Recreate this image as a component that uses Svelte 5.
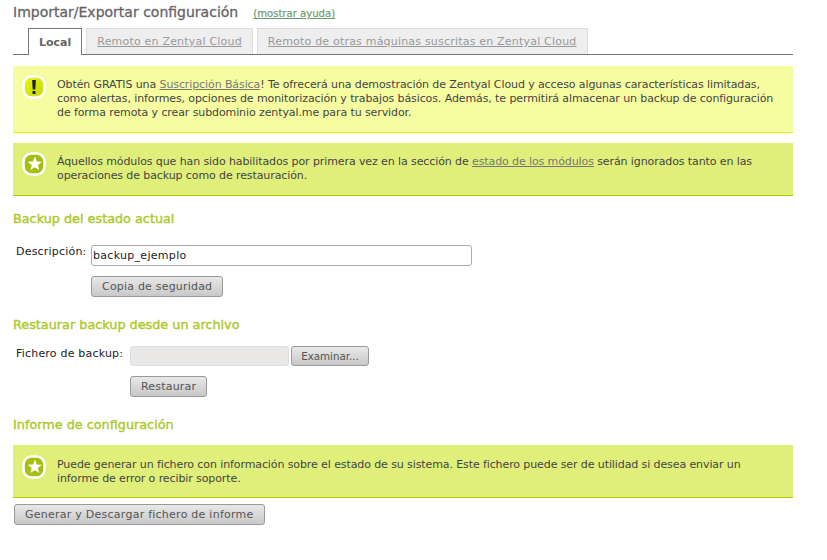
<script>
  let description = 'backup_ejemplo';
</script>

{#snippet starIcon()}
  <svg class="icon" viewBox="0 0 24 24" width="24" height="24" aria-hidden="true">
    <rect x="1.5" y="1.5" width="21" height="21" rx="8" fill="#a3bf10" stroke="#fff" stroke-width="2.6" />
    <path d="M13 4.4l1.7 5 5.2.3-4 3.3 1.3 5.1-4.4-2.8-4.4 2.8 1.3-5.1-4-3.3 5.2-.3z" fill="#fff" />
  </svg>
{/snippet}

<main class="page">
  <div class="title-row">
    <h1>Importar/Exportar configuración</h1>
    <a class="help" href="#help">(mostrar ayuda)</a>
  </div>

  <nav class="tabs">
    <span class="tab active">Local</span>
    <a class="tab" href="#cloud">Remoto en Zentyal Cloud</a>
    <a class="tab" href="#others">Remoto de otras máquinas suscritas en Zentyal Cloud</a>
  </nav>

  <div class="note warn">
    <svg class="icon" viewBox="0 0 24 24" width="24" height="24" aria-hidden="true">
      <defs>
        <linearGradient id="warnFill" x1="0" y1="0" x2="1" y2="1">
          <stop offset="0" stop-color="#eaf510" />
          <stop offset="1" stop-color="#c4d60c" />
        </linearGradient>
      </defs>
      <rect x="1.5" y="1.5" width="21" height="21" rx="8" fill="url(#warnFill)" stroke="#fff" stroke-width="2.6" />
      <path d="M10.2 5h3.6l-.5 9.5h-2.6z" fill="#1c1c10" />
      <rect x="10.5" y="16" width="3" height="3" fill="#1c1c10" />
    </svg>
    <p>Obtén GRATIS una <a href="#sub">Suscripción Básica</a>! Te ofrecerá una demostración de Zentyal Cloud y acceso algunas características limitadas, como alertas, informes, opciones de monitorización y trabajos básicos. Además, te permitirá almacenar un backup de configuración de forma remota y crear subdominio zentyal.me para tu servidor.</p>
  </div>

  <div class="note info first-info">
    {@render starIcon()}
    <p>Áquellos módulos que han sido habilitados por primera vez en la sección de <a href="#mod">estado de los módulos</a> serán ignorados tanto en las operaciones de backup como de restauración.</p>
  </div>

  <h2 class="h-backup">Backup del estado actual</h2>
  <form class="form backup-form">
    <label for="desc">Descripción:</label>
    <input id="desc" type="text" bind:value={description} />
    <span></span>
    <button type="button" class="submit">Copia de seguridad</button>
  </form>

  <h2 class="h-restore">Restaurar backup desde un archivo</h2>
  <form class="form restore-form">
    <span class="lbl">Fichero de backup:</span>
    <div class="file">
      <span class="file-box"></span>
      <button type="button" class="browse">Examinar...</button>
    </div>
    <span></span>
    <button type="button" class="submit">Restaurar</button>
  </form>

  <h2 class="h-report">Informe de configuración</h2>
  <div class="note info report-info">
    {@render starIcon()}
    <p>Puede generar un fichero con información sobre el estado de su sistema. Este fichero puede ser de utilidad si desea enviar un informe de error o recibir soporte.</p>
  </div>
  <button type="button" class="submit report-btn">Generar y Descargar fichero de informe</button>
</main>

<style>
  :global(body) { margin: 0; background: #fff; }
  .page {
    width: 780px;
    margin-left: 13px;
    padding-top: 4px;
    font: 11px/14px "DejaVu Sans", sans-serif;
    color: #333;
  }
  .title-row { display: flex; align-items: baseline; gap: 15px; height: 20px; }
  h1 {
    margin: 0;
    font: normal 14px/17px "DejaVu Sans", sans-serif;
    color: #666;
    -webkit-text-stroke: 0.3px #666;
  }
  .help { font-size: 10.1px; color: #6d9a6d; -webkit-text-stroke: 0.2px #6d9a6d; }
  .tabs {
    display: flex;
    align-items: flex-end;
    height: 30px;
    padding-left: 15px;
    box-sizing: border-box;
    border-bottom: 1px solid #777;
    margin-top: 1px;
  }
  .tab {
    box-sizing: border-box;
    height: 26px;
    margin-right: 4px;
    padding: 6px 10px 0;
    font-size: 11px;
    letter-spacing: 0.2px;
    background: #eee;
    border: 1px solid #ddd;
    border-bottom: 0;
    color: #999;
  }
  .tab.active {
    height: 27px;
    margin-bottom: -1px;
    padding: 7px 10px 0;
    background: #fff;
    border: 1px solid #777;
    border-bottom: 0;
    font-weight: bold;
    color: #666;
    letter-spacing: 0;
  }
  .note {
    display: flex;
    gap: 11px;
    box-sizing: border-box;
    padding: 12px 14px 10px 9px;
    letter-spacing: -0.1px;
    color: #444;
  }
  .note p { margin: 0; }
  .note a { color: #777; }
  .icon { flex: none; margin-top: -3px; }
  .warn {
    margin-top: 11px;
    height: 67px;
    background: #f6fda0;
    border-bottom: 1px solid #eef500;
  }
  .info { background: #e0ef7a; border-bottom: 1px solid #b2c800; height: 53px; }
  .first-info { margin-top: 10px; }
  .note:not(.warn) { padding-top: 12px; }
  .report-info { padding-top: 13px !important; }
  h2 {
    margin: 0;
    font: normal 12.8px/18px "DejaVu Sans", sans-serif;
    color: #adc92e;
    -webkit-text-stroke: 0.4px #adc92e;
  }
  .h-backup { margin-top: 14px; }
  .h-restore { margin-top: 19px; }
  .h-report { margin-top: 19px; }
  .form { display: grid; row-gap: 10px; align-items: start; color: #222; }
  .backup-form { grid-template-columns: 78px 381px; margin-top: 17px; }
  .restore-form { grid-template-columns: 117px auto; margin-top: 12px; justify-content: start; }
  label, .lbl { padding-left: 3px; letter-spacing: 0.2px; }
  .lbl { padding-top: 1px; }
  input {
    box-sizing: border-box;
    height: 21px;
    width: 381px;
    padding: 0 1px;
    font: 11px "DejaVu Sans", sans-serif;
    letter-spacing: 0.3px;
    border: 1px solid #aaa;
    border-radius: 3px;
    background: #fff;
    color: #222;
  }
  .file { display: flex; gap: 2px; }
  .file-box {
    box-sizing: border-box;
    width: 159px;
    height: 20px;
    background: #e9e8e6;
    border: 1px solid #ddd;
    border-radius: 3px;
  }
  button {
    box-sizing: border-box;
    height: 21px;
    padding: 0 10px;
    font: 11px "DejaVu Sans", sans-serif;
    letter-spacing: 0.2px;
    color: #555;
    background: linear-gradient(#e8e8e8, #c8c8c8);
    border: 1px solid #999;
    border-radius: 3px;
    justify-self: start;
  }
  .browse { width: 78px; height: 20px; padding: 0; letter-spacing: 0; font-size: 10.3px; }
  .report-info { margin-top: 11px; }
  .report-btn { display: block; margin: 6px 0 0 1px; letter-spacing: 0.25px; }
</style>
